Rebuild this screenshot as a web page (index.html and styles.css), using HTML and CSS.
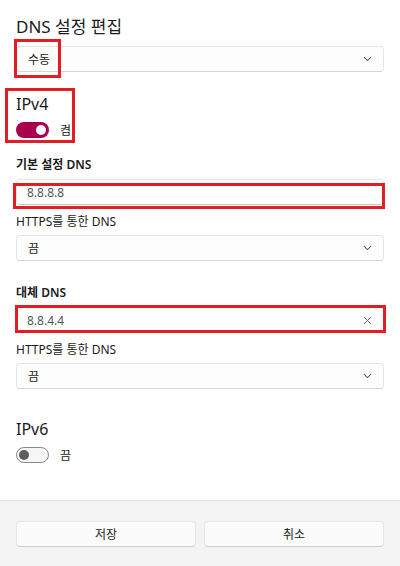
FILE: index.html
```html
<!DOCTYPE html>
<html lang="ko">

<head>
    <meta charset="UTF-8">
    <meta name="viewport" content="width=device-width, initial-scale=1.0">
    <title>DNS 설정 편집</title>
    <link rel="stylesheet" href="styles.css">
</head>

<body>
    <div class="page">
        <div class="content">
            <h1 class="title">DNS 설정 편집</h1>

            <div class="select mode">
                <span>수동</span>
                <svg class="chevron" width="9" height="6" viewBox="0 0 9 6"><path d="M1 1.2 L4.5 4.6 L8 1.2" fill="none" stroke="#5f5f5f" stroke-width="1.1"/></svg>
                <span class="mark mark-mode"></span>
            </div>

            <div class="group v4">
                <h2 class="heading">IPv4</h2>
                <div class="toggle-row">
                    <span class="toggle on"><span class="knob"></span></span>
                    <span>켬</span>
                </div>
                <span class="mark mark-v4"></span>
            </div>

            <div class="label first">기본 설정 DNS</div>
            <div class="input">
                <span class="value">8.8.8.8</span>
                <span class="mark mark-in1"></span>
            </div>
            <div class="sublabel">HTTPS를 통한 DNS</div>
            <div class="select">
                <span>끔</span>
                <svg class="chevron" width="9" height="6" viewBox="0 0 9 6"><path d="M1 1.2 L4.5 4.6 L8 1.2" fill="none" stroke="#5f5f5f" stroke-width="1.1"/></svg>
            </div>

            <div class="label">대체 DNS</div>
            <div class="input">
                <span class="value">8.8.4.4</span>
                <svg class="clear" width="9" height="9" viewBox="0 0 9 9"><path d="M1 1 L8 8 M8 1 L1 8" stroke="#6e6e6e" stroke-width="1"/></svg>
                <span class="mark mark-in2"></span>
            </div>
            <div class="sublabel">HTTPS를 통한 DNS</div>
            <div class="select">
                <span>끔</span>
                <svg class="chevron" width="9" height="6" viewBox="0 0 9 6"><path d="M1 1.2 L4.5 4.6 L8 1.2" fill="none" stroke="#5f5f5f" stroke-width="1.1"/></svg>
            </div>

            <h2 class="heading v6">IPv6</h2>
            <div class="toggle-row">
                <span class="toggle off"><span class="knob"></span></span>
                <span>끔</span>
            </div>
        </div>

        <div class="footer">
            <div class="btn">저장</div>
            <div class="btn">취소</div>
        </div>
    </div>
</body>

</html>
```

FILE: styles.css
```css
* {
    box-sizing: border-box;
}

body {
    margin: 0;
    background-color: white;
    color: #1b1b1b;
    font-family: "Noto Sans", "Noto Sans CJK KR", sans-serif;
    font-size: 12px;
}

.page {
    width: 400px;
    height: 566px;
    display: flex;
    flex-direction: column;
}

.content {
    flex: 1;
    padding: 15px 16px 0 16px;
}

.title {
    margin: 0;
    font-size: 17px;
    font-weight: normal;
    line-height: 24px;
}

/* dropdown */
.select {
    position: relative;
    height: 26px;
    display: flex;
    align-items: center;
    justify-content: space-between;
    padding: 0 11px 0 11px;
    background-color: #fdfdfd;
    border: 1px solid #e6e6e6;
    border-bottom-color: #d6d6d6;
    border-radius: 4px;
}

.select.mode {
    margin-top: 7px;
}

.chevron {
    display: block;
}

/* heading + toggle */
.group {
    position: relative;
}

.v4 {
    margin-top: 21px;
}

.heading {
    margin: 0;
    font-size: 16px;
    font-weight: normal;
    line-height: 22px;
}

.heading.v6 {
    margin-top: 29px;
}

.toggle-row {
    height: 20px;
    margin-top: 5px;
    display: flex;
    align-items: center;
    gap: 11px;
}

.toggle {
    width: 33px;
    height: 16px;
    border-radius: 8px;
    display: flex;
    align-items: center;
    padding: 0 3px;
}

.toggle .knob {
    width: 10px;
    height: 10px;
    border-radius: 50%;
}

.toggle.on {
    background-color: #a8004c;
    justify-content: flex-end;
}

.toggle.on .knob {
    background-color: white;
}

.toggle.off {
    background-color: #f6f6f6;
    border: 1px solid #8a8a8a;
    padding: 0 2px;
}

.toggle.off .knob {
    background-color: #5d5d5d;
}

/* labels */
.label {
    margin-top: 23px;
    margin-bottom: 5px;
    font-weight: 600;
    line-height: 18px;
}

.label.first {
    margin-top: 16px;
}

.sublabel {
    margin-top: 8px;
    margin-bottom: 4px;
    line-height: 18px;
}

/* text input */
.input {
    position: relative;
    height: 26px;
    display: flex;
    align-items: center;
    justify-content: space-between;
    padding: 0 11px 0 10px;
    background-color: white;
    border: 1px solid #e6e6e6;
    border-bottom-color: #c8c8c8;
    border-radius: 4px;
}

.input .value {
    color: #555;
}

.clear {
    display: block;
}

/* footer */
.footer {
    height: 66px;
    background-color: #f3f3f3;
    border-top: 1px solid #e3e3e3;
    padding: 20px 16px 0 16px;
    display: grid;
    grid-template-columns: 1fr 1fr;
    gap: 8px;
    align-items: start;
}

.btn {
    height: 26px;
    display: flex;
    align-items: center;
    justify-content: center;
    background-color: #fbfbfb;
    border: 1px solid #e5e5e5;
    border-bottom-color: #d0d0d0;
    border-radius: 4px;
}

/* red annotation boxes drawn over the controls */
.mark {
    position: absolute;
    border: 3px solid #e41d24;
}

.mark-mode {
    left: -3px;
    top: -8px;
    width: 47px;
    height: 39px;
}

.mark-v4 {
    left: -11px;
    top: -5px;
    width: 70px;
    height: 55px;
}

.mark-in1 {
    left: -4px;
    top: 3px;
    width: 372px;
    height: 26px;
}

.mark-in2 {
    left: -2px;
    top: -3px;
    width: 371px;
    height: 28px;
}
```
